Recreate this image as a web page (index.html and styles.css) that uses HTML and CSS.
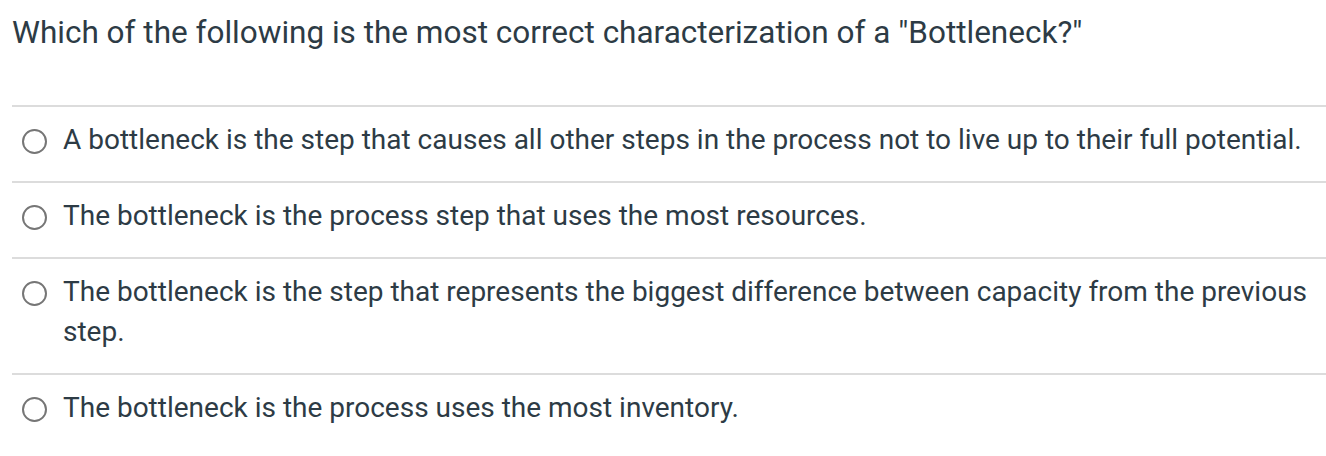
FILE: index.html
```html
<!DOCTYPE html>
<html>
<head>
<meta charset="utf-8">
<link rel="stylesheet" href="styles.css">
</head>
<body>
<div class="question">
  <div class="title">Which of the following is the most correct characterization of a "Bottleneck?"</div>
  <div class="answers">
    <div class="answer"><span class="radio"></span><span class="label">A bottleneck is the step that causes all other steps in the process not to live up to their full potential.</span></div>
    <div class="answer"><span class="radio"></span><span class="label">The bottleneck is the process step that uses the most resources.</span></div>
    <div class="answer"><span class="radio"></span><span class="label">The bottleneck is the step that represents the biggest difference between capacity from the previous step.</span></div>
    <div class="answer"><span class="radio"></span><span class="label">The bottleneck is the process uses the most inventory.</span></div>
  </div>
</div>
</body>
</html>
```
FILE: styles.css
```css
html, body {
  margin: 0;
  padding: 0;
  background: #fff;
}
body {
  font-family: Roboto, "Liberation Sans", Arial, sans-serif;
  color: #2d3b45;
}
.question {
  margin-left: 12px;
}
.title {
  font-size: 31.5px;
  line-height: 40px;
  padding-top: 13px;
  margin-bottom: 52px;
}
.answer {
  display: flex;
  align-items: flex-start;
  border-top: 2px solid #dcdcdc;
  padding: 13px 6px 21px 0;
}
.radio {
  flex: none;
  width: 21px;
  height: 21px;
  border: 2px solid #767676;
  border-radius: 50%;
  margin: 9px 16px 0 10px;
}
.label {
  font-size: 28px;
  line-height: 40px;
}
```
